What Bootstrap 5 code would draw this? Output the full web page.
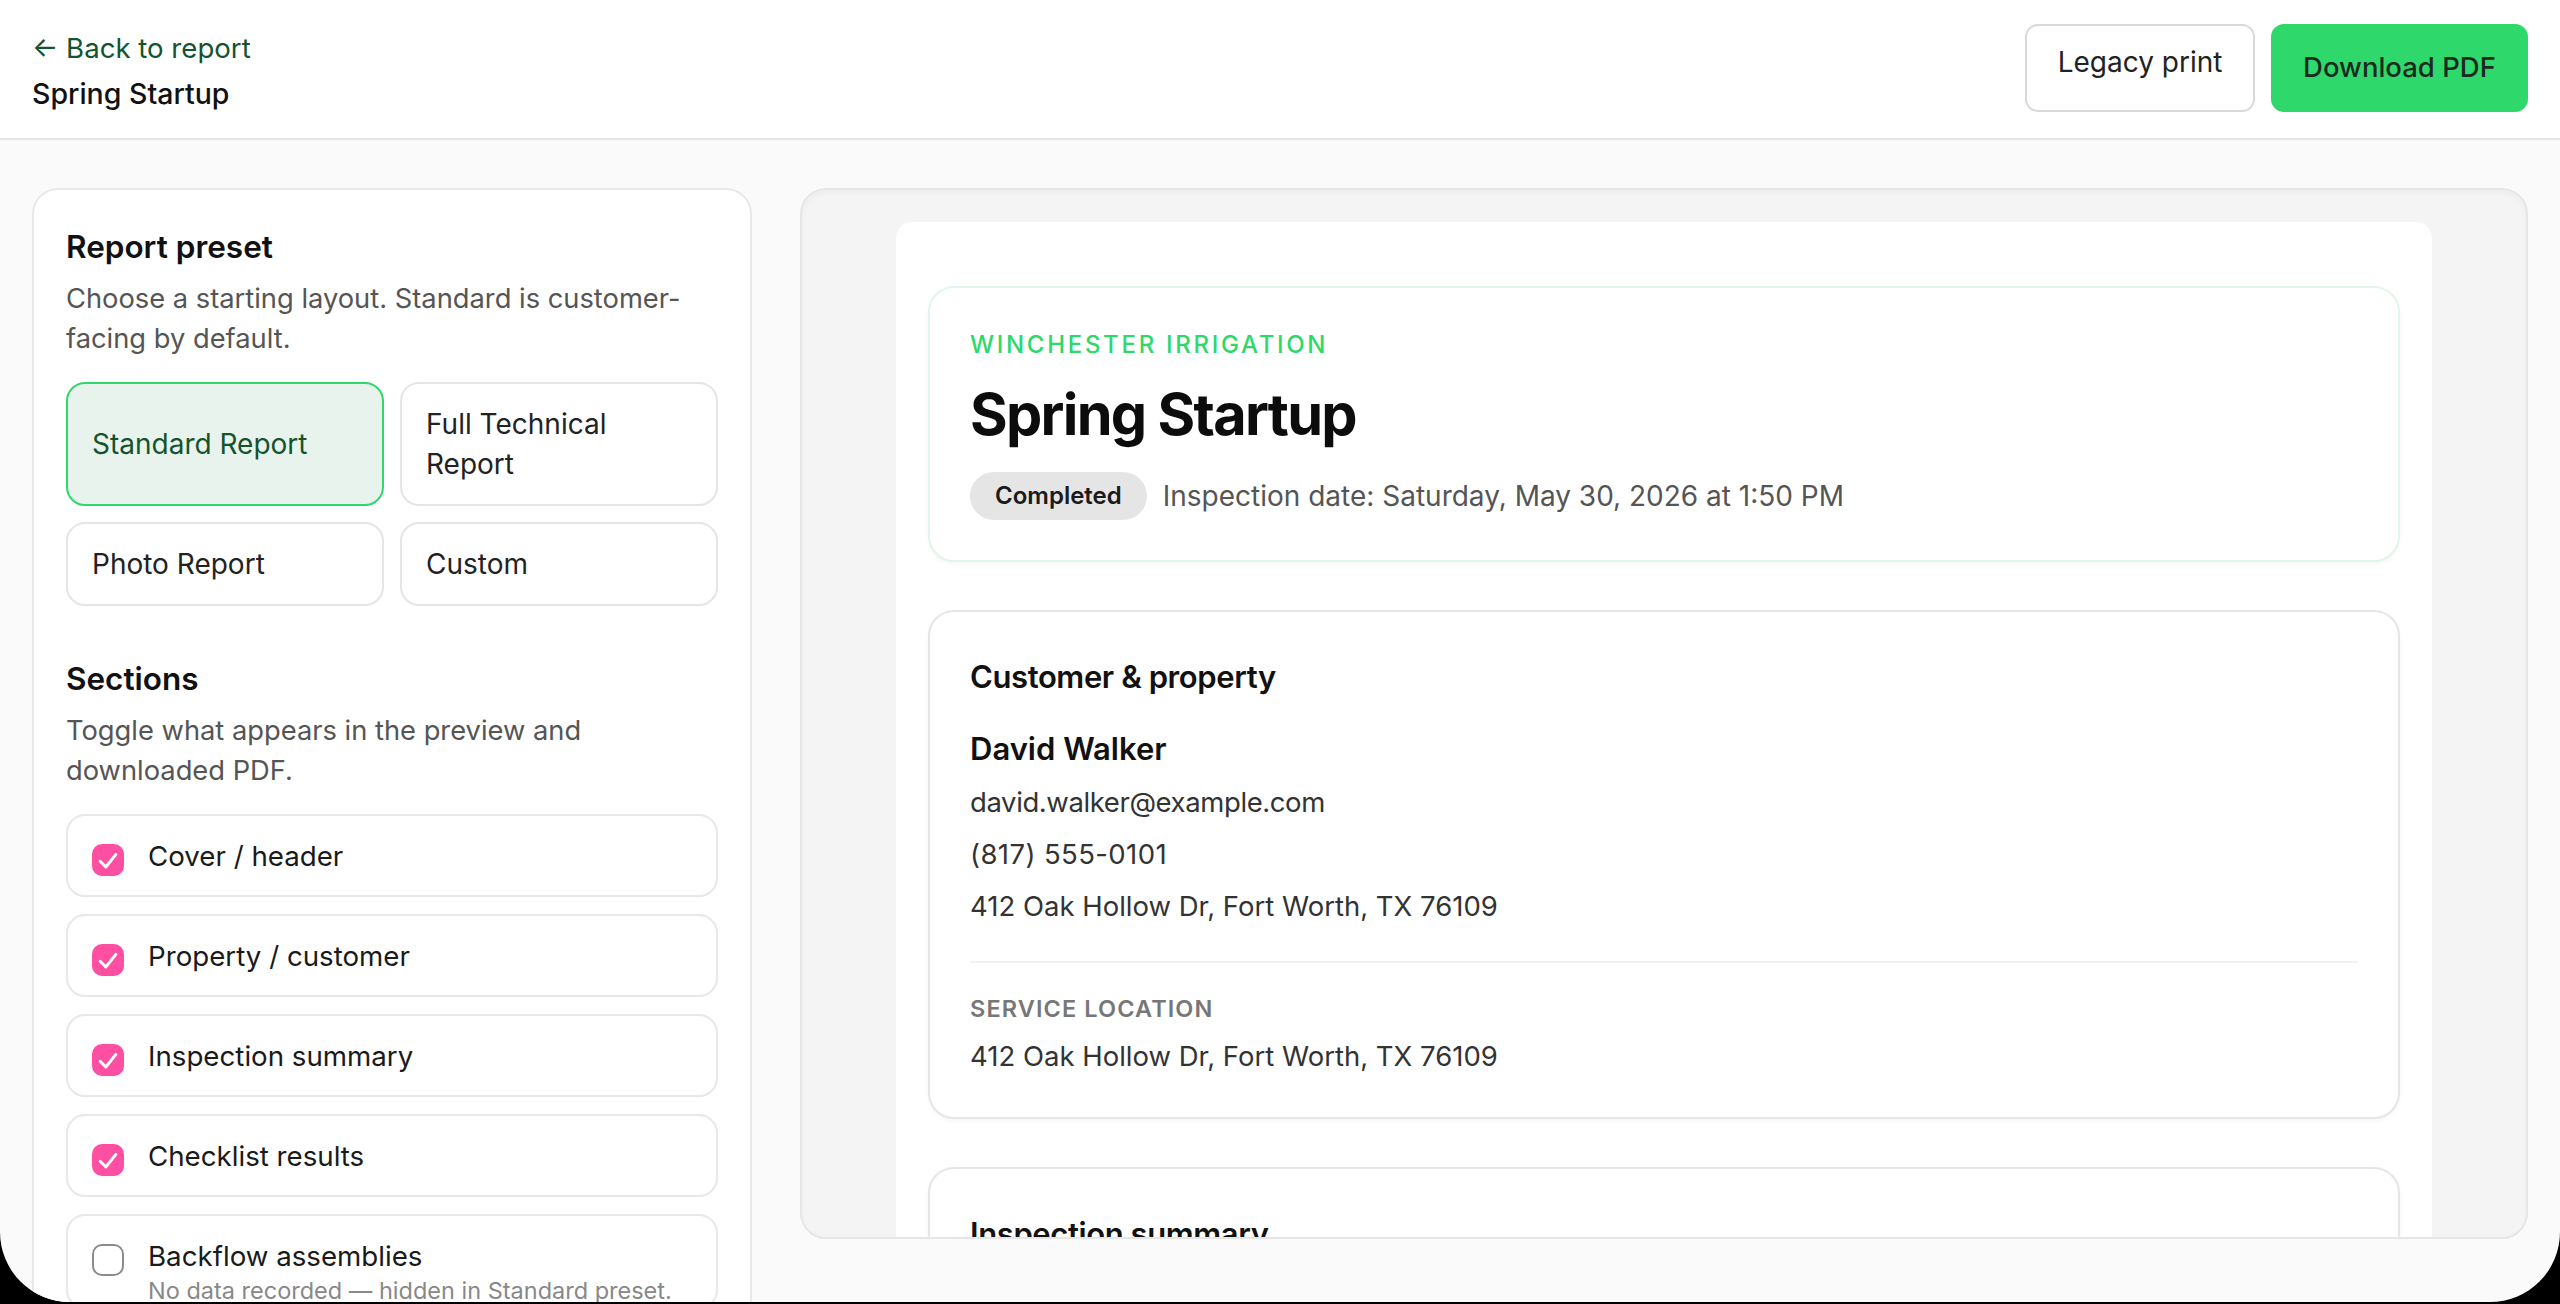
<!DOCTYPE html>
<html lang="en">
<head>
    <meta charset="UTF-8">
    <meta name="viewport" content="width=device-width, initial-scale=1.0">
    <title>Spring Startup - Report</title>
    <link rel="stylesheet" href="https://cdn.jsdelivr.net/npm/bootstrap@5.3.0/dist/css/bootstrap.min.css">
    <style>
        html, body { height: 100%; background: #000; overflow: hidden; }
        body { font-family: "Inter", "Liberation Sans", sans-serif; color: #111; }
        .app-shell { height: 1302px; background: #fafafa; border-radius: 0 0 70px 70px; overflow: hidden; }

        .top-bar { height: 140px; padding: 0 32px; background: #fff; border-bottom: 2px solid #e6e6e6; flex-shrink: 0; }
        .back-link { color: #14532d; font-size: 27.6px; line-height: 38px; text-decoration: none; margin-top: 4px; }
        .top-title { font-size: 28.5px; line-height: 38px; font-weight: 500; margin-top: 8px; }
        .btn-legacy, .btn-download { border-radius: 13px; height: 88px; font-family: inherit; }
        .btn-legacy { width: 230px; background: #fff; border: 2px solid #d9d9d9; color: #222; padding: 22px 0 0; font-size: 28px; line-height: 28px; display: block; text-align: center; text-decoration: none; }
        .btn-download { width: 257px; background: #2fd86a; border: 2px solid #2fd86a; color: #1a2a20; font-size: 27.5px; font-weight: 500; }
        .btn-download:hover { background: #2fd86a; border-color: #2fd86a; color: #1a2a20; }

        .work-area { padding: 48px 32px 0; gap: 48px; min-height: 0; overflow: hidden; flex: 1 1 auto; }
        .side-panel { width: 720px; flex-shrink: 0; background: #fff; border: 2px solid #e8e8e8; border-radius: 26px; padding: 35px 32px 32px; height: 1300px; }
        .side-heading { font-size: 31.5px; line-height: 44px; font-weight: 600; margin: 0; color: #111; }
        .side-text { font-size: 27.3px; line-height: 40px; color: #555; margin: 10px 0 0; }
        .preset-grid { display: grid; grid-template-columns: 318px 318px; grid-template-rows: 124px 84px; gap: 16px; margin-top: 23px; }
        .preset-btn { background: #fff; border: 2px solid #e5e5e5; border-radius: 19px; color: #222; font-size: 28px; line-height: 40px; text-align: left; padding: 0 24px; }
        .preset-btn.is-active { background: #e9f3ed; border-color: #2fd86a; color: #14532d; }
        .sections-heading { margin-top: 51px; }
        .sections-text { margin-top: 10px; }
        .section-list { margin-top: 23px; display: flex; flex-direction: column; gap: 17px; }
        .section-item { min-height: 83px; border: 2px solid #e8e8e8; border-radius: 19px; padding: 21px 24px 0; display: flex; align-items: flex-start; gap: 24px; margin: 0; background: #fff; flex-shrink: 0; }
        .section-item .form-check-input { width: 32px; height: 32px; margin: 7px 0 0; border: 2px solid #8c8c8c; border-radius: 10px; flex-shrink: 0; }
        .section-item .form-check-input:checked {
            background-color: #ff4fa3; border-color: #ff4fa3; background-size: 100% 100%;
            background-image: url("data:image/svg+xml,%3csvg xmlns='http://www.w3.org/2000/svg' viewBox='0 0 32 32'%3e%3cpath fill='none' stroke='%23fff' stroke-linecap='round' stroke-linejoin='round' stroke-width='3.4' d='M7 17.5l6.5 6.5L25 9.5'/%3e%3c/svg%3e");
        }
        .section-name { font-size: 27.7px; line-height: 38px; color: #1a1a1a; }
        .section-note { font-size: 23.5px; line-height: 32px; color: #888; }

        .preview-panel { flex: 1 1 auto; height: 1051px; overflow: hidden; background: #f4f4f4; border: 2px solid #e6e6e6; border-radius: 26px; box-shadow: inset 0 3px 6px rgba(0,0,0,.03); padding: 32px 94px 0; }
        .preview-sheet { background: #fff; border-radius: 16px; padding: 64px 32px 32px; min-height: 1200px; }
        .sheet-block { background: #fff; border: 2px solid #e6e6e6; border-radius: 26px; padding: 45px 40px 42px; margin-bottom: 48px; box-shadow: 0 2px 4px rgba(0,0,0,.04); }
        .sheet-block.is-hero { border-color: #e0f6e8; height: 276px; padding-top: 41px; }
        .brand-line { color: #2fd86a; font-size: 24px; line-height: 32px; font-weight: 500; letter-spacing: 2.7px; }
        .report-title { font-size: 57.6px; line-height: 70px; font-weight: 700; letter-spacing: -1.7px; margin: 18px 0 0; color: #0c0c0c; }
        .status-pill { background: #e5e5e5; color: #1a1a1a; border-radius: 24px; height: 48px; padding: 0 25px; font-size: 24px; font-weight: 600; line-height: 48px; }
        .date-text { color: #555; font-size: 28px; }
        .status-row { margin-top: 23px; }
        .block-title { font-size: 31px; line-height: 40px; font-weight: 600; letter-spacing: -.4px; margin: 0; }
        .person-name { font-size: 31px; line-height: 40px; font-weight: 600; margin-top: 32px; }
        .detail-line { font-size: 27.5px; line-height: 38px; color: #333; margin: 14px 0 0; }
        .detail-email { letter-spacing: -.4px; }
        .detail-phone { letter-spacing: .4px; }
        .block-rule { border: 0; border-top: 2px solid #f1f1f1; margin: 36px 0 0; opacity: 1; }
        .field-label { font-size: 23.5px; line-height: 32px; font-weight: 600; letter-spacing: 1.1px; color: #777; margin-top: 30px; }
        .detail-line.is-tight { margin-top: 12px; }
    </style>
</head>
<body>
<div class="app-shell d-flex flex-column">
    <!-- Top bar -->
    <header class="top-bar d-flex justify-content-between align-items-center">
        <div>
            <a class="back-link d-block" href="#">← Back to report</a>
            <div class="top-title">Spring Startup</div>
        </div>
        <div class="d-flex gap-3 align-self-start mt-4">
            <a class="btn-legacy" href="#" role="button">Legacy print</a>
            <button class="btn btn-download" type="button">Download PDF</button>
        </div>
    </header>

    <div class="work-area d-flex align-items-start">
        <!-- Options -->
        <aside class="side-panel">
            <h2 class="side-heading">Report preset</h2>
            <p class="side-text">Choose a starting layout. Standard is customer-facing by default.</p>
            <div class="preset-grid">
                <button class="preset-btn is-active" type="button">Standard Report</button>
                <button class="preset-btn" type="button">Full Technical Report</button>
                <button class="preset-btn" type="button">Photo Report</button>
                <button class="preset-btn" type="button">Custom</button>
            </div>

            <h2 class="side-heading sections-heading">Sections</h2>
            <p class="side-text sections-text">Toggle what appears in the preview and downloaded PDF.</p>
            <div class="section-list">
                <label class="section-item"><input class="form-check-input" type="checkbox" checked><span class="section-name">Cover / header</span></label>
                <label class="section-item"><input class="form-check-input" type="checkbox" checked><span class="section-name">Property / customer</span></label>
                <label class="section-item"><input class="form-check-input" type="checkbox" checked><span class="section-name">Inspection summary</span></label>
                <label class="section-item"><input class="form-check-input" type="checkbox" checked><span class="section-name">Checklist results</span></label>
                <label class="section-item"><input class="form-check-input" type="checkbox">
                    <span><span class="section-name d-block">Backflow assemblies</span><span class="section-note d-block">No data recorded — hidden in Standard preset.</span></span>
                </label>
            </div>
        </aside>

        <!-- Preview -->
        <main class="preview-panel">
            <div class="preview-sheet">
                <section class="sheet-block is-hero">
                    <div class="brand-line">WINCHESTER IRRIGATION</div>
                    <h1 class="report-title">Spring Startup</h1>
                    <div class="status-row d-flex align-items-center gap-3">
                        <span class="status-pill">Completed</span>
                        <span class="date-text">Inspection date: Saturday, May 30, 2026 at 1:50 PM</span>
                    </div>
                </section>
                <section class="sheet-block">
                    <h3 class="block-title">Customer &amp; property</h3>
                    <div class="person-name">David Walker</div>
                    <p class="detail-line detail-email">david.walker@example.com</p>
                    <p class="detail-line detail-phone">(817) 555-0101</p>
                    <p class="detail-line">412 Oak Hollow Dr, Fort Worth, TX 76109</p>
                    <hr class="block-rule">
                    <div class="field-label">SERVICE LOCATION</div>
                    <p class="detail-line is-tight">412 Oak Hollow Dr, Fort Worth, TX 76109</p>
                </section>
                <section class="sheet-block">
                    <h3 class="block-title">Inspection summary</h3>
                </section>
            </div>
        </main>
    </div>
</div>
<script src="https://cdn.jsdelivr.net/npm/bootstrap@5.3.0/dist/js/bootstrap.bundle.min.js"></script>
</body>
</html>
